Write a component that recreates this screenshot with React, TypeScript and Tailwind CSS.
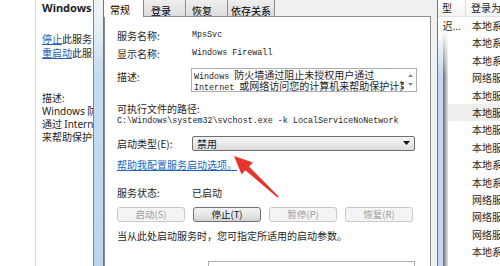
const logons = [
  "本地系统",
  "本地系统",
  "本地系统",
  "网络服务",
  "本地服务",
  "本地服务",
  "本地服务",
  "本地服务",
  "本地系统",
  "本地系统",
  "网络服务",
  "网络服务",
  "网络服务",
  "本地系统",
];

function LeftPane() {
  return (
    <div className="flex w-[93px] shrink-0">
      <div className="w-[36px] shrink-0 border-r border-[#dadada] bg-white"></div>
      <div className="flex min-w-0 flex-1 flex-col overflow-hidden whitespace-nowrap pl-[6px] text-[10px] text-[#1e1e1e]">
        <div className="mt-[1px] h-[14px] text-[11px] leading-[14px] font-bold [font-family:'Noto_Sans',sans-serif]">
          Windows 防火墙
        </div>
        <div className="mt-[17px] h-[14px] leading-[14px]">
          <span className="text-[#1a5fb4] underline">停止</span>此服务
        </div>
        <div className="h-[14px] leading-[14px]">
          <span className="text-[#1a5fb4] underline">重启动</span>此服务
        </div>
        <div className="mt-[31px] h-[13px] leading-[13px]">描述:</div>
        <div className="h-[13px] leading-[13px]">
          <span className="[font-family:'Noto_Sans',sans-serif]">Windows </span>防火墙通过阻止未授权用户
        </div>
        <div className="h-[13px] leading-[13px]">
          通过 <span className="[font-family:'Noto_Sans',sans-serif]">Internet</span> 或网络访问您的计算机
        </div>
        <div className="h-[13px] leading-[13px]">来帮助保护计算机。</div>
      </div>
    </div>
  );
}

function Tabs() {
  return (
    <div className="flex h-[16px] shrink-0 items-end text-[10px] leading-[12px]">
      <div className="relative z-10 -mb-px h-[21px] w-[40px] border-r border-[#898c95] bg-white pl-[6px] pt-[8px]">
        常规
      </div>
      <div className="h-[20px] w-[42px] border-r border-t border-[#898c95] bg-[linear-gradient(to_bottom,#f2f2f2,#dcdcdc)] pl-[7px] pt-[8px]">
        登录
      </div>
      <div className="h-[20px] w-[42px] border-r border-t border-[#898c95] bg-[linear-gradient(to_bottom,#f2f2f2,#dcdcdc)] pl-[6px] pt-[8px]">
        恢复
      </div>
      <div className="h-[20px] w-[47px] border-r border-t border-[#898c95] bg-[linear-gradient(to_bottom,#f2f2f2,#dcdcdc)] pl-[3px] pt-[8px]">
        依存关系
      </div>
    </div>
  );
}

function Button({ label, enabled }: { label: string; enabled?: boolean }) {
  return (
    <div
      className={
        enabled
          ? "h-[15px] w-[68px] rounded-[3px] border border-[#707070] bg-[linear-gradient(to_bottom,#f3f3f3,#e6e6e6_50%,#d4d4d4)] text-center text-[9.5px] leading-[13px] text-[#111]"
          : "h-[15px] w-[68px] rounded-[3px] border border-[#c9c9c9] bg-[#f4f4f4] text-center text-[9.5px] leading-[13px] text-[#9d9d9d]"
      }
    >
      {label}
    </div>
  );
}

function Dialog() {
  const mono = "[font-family:'Liberation_Mono',monospace] text-[8.4px]";
  return (
    <div className="flex w-[334px] shrink-0 flex-col border-r border-[#6b7785] bg-[#f0f0f0]">
      <Tabs />
      <div className="flex h-[252px] w-[327px] flex-col border-l border-r border-t border-[#898c95] bg-white pl-[12px] text-[10px] text-[#1e1e1e]">
        <div className="mt-[11px] flex h-[14px] items-center">
          <div className="w-[75px]">服务名称:</div>
          <div className={mono}>MpsSvc</div>
        </div>
        <div className="mt-[4px] flex h-[14px] items-center">
          <div className="w-[75px]">显示名称:</div>
          <div className={mono}>Windows Firewall</div>
        </div>
        <div className="mt-[8px] flex h-[24px]">
          <div className="w-[74px] pt-[2px] leading-[14px]">描述:</div>
          <div className="flex h-[24px] w-[226px] border border-[#abadb3] bg-white">
            <div className="min-w-0 flex-1 overflow-hidden whitespace-nowrap pl-[2px] pt-[2px] leading-[8.5px]">
              <div>
                <span className={mono}>Windows </span>防火墙通过阻止未授权用户通过
              </div>
              <div>
                <span className={mono}>Internet </span>或网络访问您的计算机来帮助保护计算机。
              </div>
            </div>
            <div className="flex w-[12px] flex-col items-center justify-between py-[5px]">
              <svg width="5" height="3" viewBox="0 0 5 3">
                <path d="M0 3L2.5 0L5 3Z" fill="#8a8a8a" />
              </svg>
              <svg width="5" height="3" viewBox="0 0 5 3">
                <path d="M0 0L2.5 3L5 0Z" fill="#8a8a8a" />
              </svg>
            </div>
          </div>
        </div>
        <div className="mt-[10px] h-[13px] leading-[13px]">可执行文件的路径:</div>
        <div className={"flex h-[14px] items-center " + mono}>
          C:\Windows\system32\svchost.exe -k LocalServiceNoNetwork
        </div>
        <div className="mt-[8px] flex h-[15px] items-center">
          <div className="w-[75px]">启动类型(E):</div>
          <div className="flex h-[15px] w-[223px] items-center justify-between rounded-[2px] border border-[#707070] bg-[linear-gradient(to_bottom,#f3f3f3,#ebebeb_50%,#dcdcdc)] pl-[4px] pr-[4px]">
            <span className="leading-[13px]">禁用</span>
            <svg width="7" height="4" viewBox="0 0 7 4">
              <path d="M0 0L3.5 4L7 0Z" fill="#111" />
            </svg>
          </div>
        </div>
        <div className="mt-[7px] flex h-[14px] items-center">
          <span className="text-[#1a66c2] underline">帮助我配置服务启动选项。</span>
        </div>
        <div className="mt-[7px] h-px w-[295px] bg-[#d4dde3]"></div>
        <div className="mt-[7px] flex h-[14px] items-center">
          <div className="w-[75px]">服务状态:</div>
          <div>已启动</div>
        </div>
        <div className="mt-[7px] flex gap-[8px]">
          <Button label="启动(S)" />
          <Button label="停止(T)" enabled />
          <Button label="暂停(P)" />
          <Button label="恢复(R)" />
        </div>
        <div className="mt-[7px] flex h-[14px] items-center">
          当从此处启动服务时，您可指定所适用的启动参数。
        </div>
        <div className="mt-[18px] flex h-[20px]">
          <div className="w-[91px] pt-[3px]">启动参数(M):</div>
          <div className="h-[20px] w-[207px] border border-[#abadb3] bg-white"></div>
        </div>
      </div>
    </div>
  );
}

function ServiceList() {
  return (
    <div className="relative flex min-w-0 flex-1 flex-col text-[10px] text-[#1e1e1e]">
      <div className="flex h-[17px] shrink-0 border-b border-[#e2e2e2] bg-[linear-gradient(to_bottom,#ffffff,#f4f4f4)] leading-[16px]">
        <div className="w-[28px] shrink-0 border-r border-[#dedede] pl-[4px]">
          <div className="overflow-hidden whitespace-nowrap">
            <span className="-ml-[30px] inline-block">启动类型</span>
          </div>
        </div>
        <div className="overflow-hidden whitespace-nowrap pl-[5px]">登录为</div>
      </div>
      {logons.map((name, i) => (
        <div
          key={i}
          className={
            i === 5
              ? "flex h-[17.4px] shrink-0 bg-[#eeeeee] leading-[17.4px]"
              : "flex h-[17.4px] shrink-0 leading-[17.4px]"
          }
        >
          <div className="w-[28px] shrink-0 pl-[4px]">
            <div className="overflow-hidden whitespace-nowrap">
              {i === 0 && <span className="-ml-[33px] inline-block">自动(延迟...</span>}
            </div>
          </div>
          <div className="overflow-hidden whitespace-nowrap pl-[6px]">{name}</div>
        </div>
      ))}
      <div className="absolute bottom-0 left-0 top-[30px] w-[10px] bg-[linear-gradient(to_right,#bcd6ee_0%,#c4dbf0_45%,#6e6e6e_52%,#9a9a9a_70%,#e6e6e6_100%)] [mask-image:linear-gradient(to_bottom,transparent,black_45px)]"></div>
    </div>
  );
}

function Arrow() {
  return (
    <svg className="pointer-events-none absolute left-0 top-0" width="500" height="266" viewBox="0 0 500 266">
      <polygon
        points="234,156 253,162.6 249,166.6 278.6,196.6 277.4,197.6 245.3,170.3 241.6,174.4"
        fill="#e5352b"
      />
    </svg>
  );
}

export default function App() {
  return (
    <div className="relative flex h-[266px] w-[500px] overflow-hidden bg-white [font-family:'Noto_Sans_CJK_SC','Noto_Sans',sans-serif]">
      <LeftPane />
      <div className="w-[11px] shrink-0 border-x border-l-[#7b8794] border-r-[#6b7785] bg-[linear-gradient(to_bottom,#f1f4f7_0px,#e2ecf5_35px,#c6dcf0_70px,#bcd5ee_100%)]"></div>
      <Dialog />
      <ServiceList />
      <Arrow />
    </div>
  );
}
